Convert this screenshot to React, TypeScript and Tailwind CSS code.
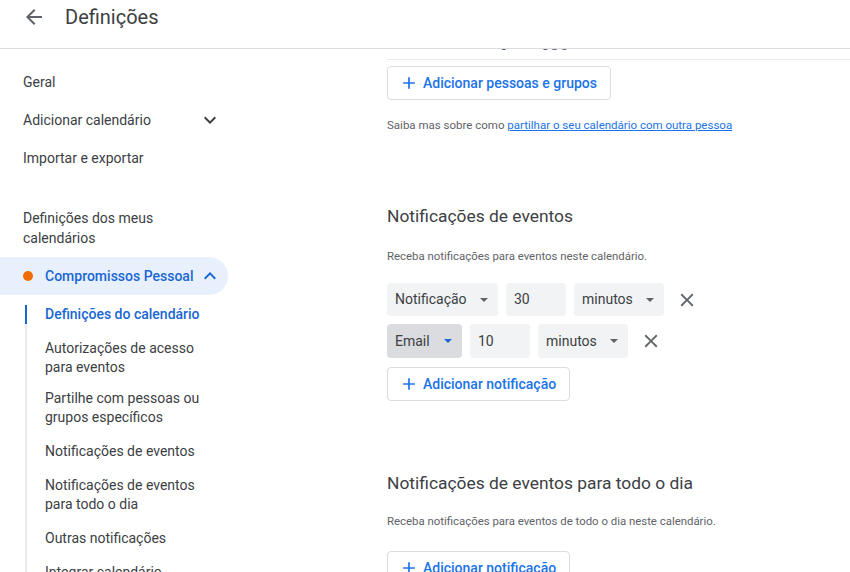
import React from "react";

const ChevronDown = () => (
  <svg width="24" height="24" viewBox="0 0 24 24" fill="#3c4043">
    <path d="M16.59 8.59L12 13.17 7.41 8.59 6 10l6 6 6-6z" />
  </svg>
);
const ChevronUp = () => (
  <svg width="24" height="24" viewBox="0 0 24 24" fill="#1967d2">
    <path d="M12 8l-6 6 1.41 1.41L12 10.83l4.59 4.58L18 14z" />
  </svg>
);
const Plus = () => (
  <svg width="20" height="20" viewBox="0 0 24 24" fill="#1a73e8">
    <path d="M19 13h-6v6h-2v-6H5v-2h6V5h2v6h6v2z" />
  </svg>
);
const Close = () => (
  <svg width="22" height="22" viewBox="0 0 24 24" fill="#5f6368">
    <path d="M19 6.41L17.59 5 12 10.59 6.41 5 5 6.41 10.59 12 5 17.59 6.41 19 12 13.41 17.59 19 19 17.59 13.41 12z" />
  </svg>
);
const Caret = ({ color = "#5f6368" }: { color?: string }) => (
  <svg width="8" height="4" viewBox="0 0 8 4" fill={color}>
    <path d="M0 0h8L4 4z" />
  </svg>
);

function Select({ label, w, active }: { label: string; w: string; active?: boolean }) {
  return (
    <div
      className={`${w} h-full shrink-0 rounded-[4px] flex items-center justify-between pl-[8px] pr-[10px] ${
        active ? "bg-[#dadce0]" : "bg-[#f1f3f4]"
      }`}
    >
      <span>{label}</span>
      <Caret color={active ? "#1967d2" : "#5f6368"} />
    </div>
  );
}

function AddButton({ label }: { label: string }) {
  return (
    <div className="inline-flex h-[34px] items-center gap-[4px] rounded-[4px] border border-[#dadce0] bg-white pl-[11px] pr-[13px] text-[14px] font-medium text-[#1a73e8]">
      <Plus />
      <span>{label}</span>
    </div>
  );
}

export default function App() {
  const sub = "pt-[8px] pb-[7px]";
  return (
    <div
      className="w-[850px] h-[572px] overflow-hidden bg-white flex flex-col text-[#3c4043]"
      style={{ fontFamily: "Roboto, 'Liberation Sans', Arial, sans-serif" }}
    >
      <header className="h-[49px] shrink-0 border-b border-[#dadce0] flex items-start pt-[5px] relative z-10 bg-white">
        <div className="ml-[22px] w-[24px] h-[24px] flex items-center justify-center">
          <svg width="24" height="24" viewBox="0 0 24 24" fill="#5f6368">
            <path d="M20 11H7.83l5.59-5.59L12 4l-8 8 8 8 1.41-1.41L7.83 13H20v-2z" />
          </svg>
        </div>
        <h1 className="ml-[19px] text-[20px] leading-[24px] text-[#3c4043]">Definições</h1>
      </header>

      <div className="flex flex-1 min-h-0 overflow-hidden">
        <nav className="w-[243px] shrink-0 pt-[14px] text-[14px]">
          <div className="h-[38px] flex items-center pl-[23px]">Geral</div>
          <div className="h-[38px] flex items-center justify-between pl-[23px] pr-[21px]">
            <span>Adicionar calendário</span>
            <ChevronDown />
          </div>
          <div className="h-[38px] flex items-center pl-[23px]">Importar e exportar</div>

          <div className="mt-[31px] pl-[23px] pr-[40px] leading-[20px]">
            Definições dos meus calendários
          </div>

          <div className="mt-[9px] w-[228px] h-[38px] rounded-r-full bg-[#e8f0fe] flex items-center pl-[23px] pr-[6px]">
            <span className="w-[10px] h-[10px] rounded-full bg-[#ef6c00]" />
            <span className="ml-[12px] flex-1 font-medium text-[#1967d2]">Compromissos Pessoal</span>
            <ChevronUp />
          </div>

          <div className="mt-[10px] ml-[25px] border-l-2 border-[#e8eaed] leading-[19px]">
            <div className="pb-[7px]">
              <div className="-ml-[2px] border-l-2 border-[#1967d2] pl-[18px] font-medium text-[#1967d2]">
                Definições do calendário
              </div>
            </div>
            <div className={sub}>
              <div className="pl-[18px] pr-[20px]">Autorizações de acesso para eventos</div>
            </div>
            <div className={`${sub} -mt-[3px]`}>
              <div className="pl-[18px] pr-[20px]">Partilhe com pessoas ou grupos específicos</div>
            </div>
            <div className={sub}>
              <div className="pl-[18px]">Notificações de eventos</div>
            </div>
            <div className={sub}>
              <div className="pl-[18px] pr-[20px]">Notificações de eventos para todo o dia</div>
            </div>
            <div className={sub}>
              <div className="pl-[18px]">Outras notificações</div>
            </div>
            <div className={sub}>
              <div className="pl-[18px]">Integrar calendário</div>
            </div>
          </div>
        </nav>

        <main className="flex-1 pl-[144px]">
          <div className="-mt-[16px] h-[20px] w-full pl-[46px] text-[13px] leading-[20px] text-[#5f6368]">
            misasassorganizing@gmail.com
          </div>
          <div className="mt-[6px] w-full border-t border-[#e8eaed]" />

          <div className="mt-[6px]">
            <AddButton label="Adicionar pessoas e grupos" />
          </div>

          <p className="mt-[17px] text-[11.5px] leading-[16px] text-[#5f6368]">
            Saiba mas sobre como{" "}
            <span className="text-[#1a73e8] underline">partilhar o seu calendário com outra pessoa</span>
          </p>

          <h2 className="mt-[71px] text-[17.4px] leading-[24px] text-[#3c4043]">Notificações de eventos</h2>
          <p className="mt-[20px] text-[11.4px] leading-[16px] text-[#5f6368]">
            Receba notificações para eventos neste calendário.
          </p>

          <div className="mt-[19px] h-[33px] flex items-center gap-[8px] text-[14px]">
            <Select label="Notificação" w="w-[111px]" />
            <div className="w-[60px] h-full shrink-0 rounded-[4px] bg-[#f1f3f4] flex items-center pl-[8px]">30</div>
            <Select label="minutos" w="w-[90px]" />
            <div className="ml-[4px] flex items-center">
              <Close />
            </div>
          </div>
          <div className="mt-[8px] h-[34px] flex items-center gap-[8px] text-[14px]">
            <Select label="Email" w="w-[75px]" active />
            <div className="w-[60px] h-full shrink-0 rounded-[4px] bg-[#f1f3f4] flex items-center pl-[8px]">10</div>
            <Select label="minutos" w="w-[90px]" />
            <div className="ml-[4px] flex items-center">
              <Close />
            </div>
          </div>

          <div className="mt-[9px]">
            <AddButton label="Adicionar notificação" />
          </div>

          <h2 className="mt-[70px] text-[17.4px] leading-[24px] text-[#3c4043]">
            Notificações de eventos para todo o dia
          </h2>
          <p className="mt-[18px] text-[11.4px] leading-[16px] text-[#5f6368]">
            Receba notificações para eventos de todo o dia neste calendário.
          </p>
          <div className="mt-[22px]">
            <AddButton label="Adicionar notificação" />
          </div>
        </main>
      </div>
    </div>
  );
}
